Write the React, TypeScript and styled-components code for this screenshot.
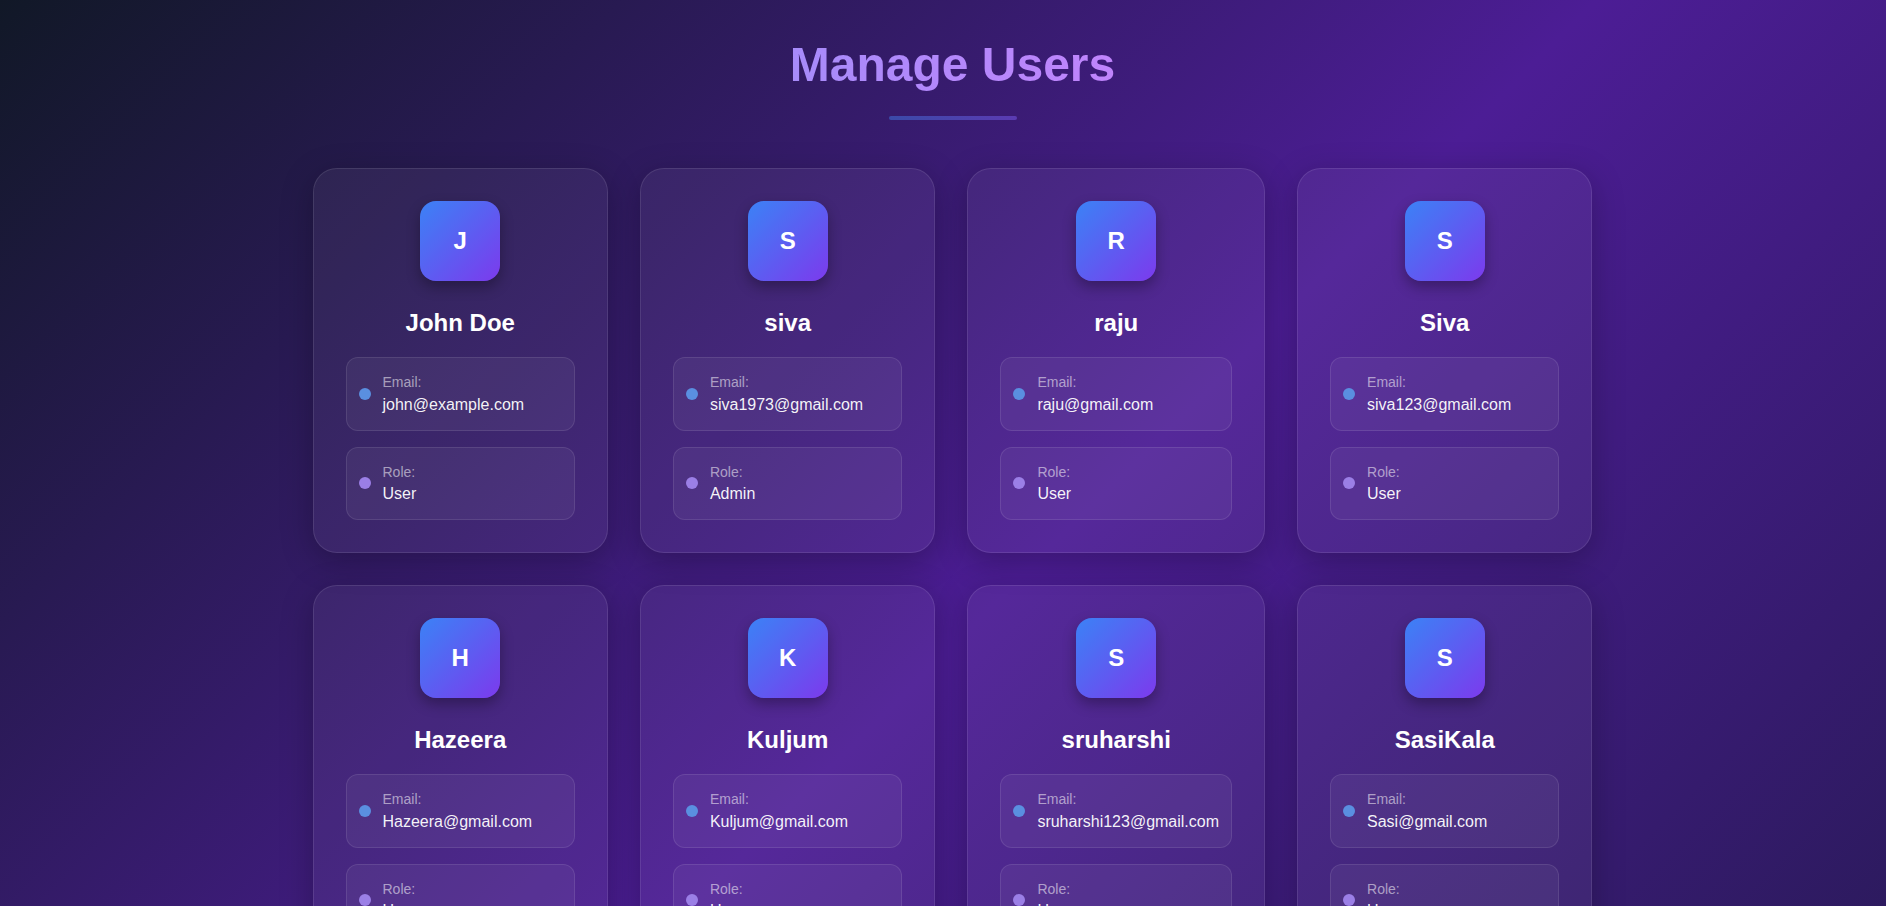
import * as React from 'react';
import styled, { createGlobalStyle } from 'styled-components';

const GlobalStyle = createGlobalStyle`
  body {
    margin: 0;
    font-family: 'Liberation Sans', Arial, sans-serif;
    background: #2a1a5a;
  }
`;

const Page = styled.div`
  min-height: 100vh;
  box-sizing: border-box;
  padding: 37px 0 48px 19px;
  background: linear-gradient(135deg, #111827 0%, #4c1d95 55%, #2a1a5a 100%);
`;

const Header = styled.header`
  display: flex;
  flex-direction: column;
  align-items: center;
  margin-bottom: 48px;
`;

const Title = styled.h1`
  margin: 0;
  font-size: 48px;
  font-weight: 700;
  background: linear-gradient(90deg, #a78bfa, #c084fc);
  -webkit-background-clip: text;
  background-clip: text;
  color: transparent;
`;

const Underline = styled.div`
  width: 128px;
  height: 4px;
  margin-top: 24px;
  border-radius: 2px;
  background: linear-gradient(90deg, #3b4aa8, #5b3bb2);
`;

const Grid = styled.div`
  max-width: 1280px;
  margin: 0 auto;
  display: grid;
  grid-template-columns: repeat(4, 1fr);
  gap: 32px;
`;

const Card = styled.div`
  display: flex;
  flex-direction: column;
  align-items: center;
  padding: 32px;
  border-radius: 24px;
  border: 1px solid rgba(255, 255, 255, 0.1);
  background: rgba(255, 255, 255, 0.05);
  box-shadow: 0 8px 32px rgba(0, 0, 0, 0.25);
`;

const Avatar = styled.div`
  width: 80px;
  height: 80px;
  border-radius: 16px;
  display: flex;
  align-items: center;
  justify-content: center;
  margin-bottom: 24px;
  background: linear-gradient(135deg, #3b82f6, #7c3aed);
  box-shadow: 0 6px 14px rgba(0, 0, 0, 0.3);
  color: #fff;
  font-size: 24px;
  font-weight: 700;
`;

const Name = styled.h2`
  margin: 0 0 16px;
  font-size: 24px;
  line-height: 1.5;
  font-weight: 700;
  color: #fff;
`;

const InfoList = styled.div`
  align-self: stretch;
  display: flex;
  flex-direction: column;
  gap: 16px;
`;

const InfoBox = styled.div`
  display: flex;
  align-items: center;
  gap: 12px;
  padding: 16px 12px;
  border-radius: 12px;
  border: 1px solid rgba(255, 255, 255, 0.1);
  background: rgba(255, 255, 255, 0.05);
`;

const Dot = styled.span<{ $tone: 'email' | 'role' }>`
  flex: none;
  width: 12px;
  height: 12px;
  border-radius: 50%;
  background: ${props => (props.$tone === 'email' ? '#5a8fe0' : '#9b7fe6')};
`;

const InfoText = styled.div`
  display: flex;
  flex-direction: column;
  min-width: 0;
`;

const Label = styled.span`
  font-size: 14px;
  margin-bottom: 5.5px;
  color: rgba(255, 255, 255, 0.55);
`;

const Value = styled.span`
  font-size: 16px;
  color: rgba(255, 255, 255, 0.95);
  white-space: nowrap;
`;

interface User {
  name: string;
  email: string;
  role: string;
}

const users: User[] = [
  { name: 'John Doe', email: 'john@example.com', role: 'User' },
  { name: 'siva', email: 'siva1973@gmail.com', role: 'Admin' },
  { name: 'raju', email: 'raju@gmail.com', role: 'User' },
  { name: 'Siva', email: 'siva123@gmail.com', role: 'User' },
  { name: 'Hazeera', email: 'Hazeera@gmail.com', role: 'User' },
  { name: 'Kuljum', email: 'Kuljum@gmail.com', role: 'User' },
  { name: 'sruharshi', email: 'sruharshi123@gmail.com', role: 'User' },
  { name: 'SasiKala', email: 'Sasi@gmail.com', role: 'User' },
];

const UserCard: React.FC<{ user: User }> = ({ user }) => (
  <Card>
    <Avatar>{user.name.charAt(0).toUpperCase()}</Avatar>
    <Name>{user.name}</Name>
    <InfoList>
      <InfoBox>
        <Dot $tone="email" />
        <InfoText>
          <Label>Email:</Label>
          <Value>{user.email}</Value>
        </InfoText>
      </InfoBox>
      <InfoBox>
        <Dot $tone="role" />
        <InfoText>
          <Label>Role:</Label>
          <Value>{user.role}</Value>
        </InfoText>
      </InfoBox>
    </InfoList>
  </Card>
);

const App: React.FC = () => (
  <>
    <GlobalStyle />
    <Page>
      <Header>
        <Title>Manage Users</Title>
        <Underline />
      </Header>
      <Grid>
        {users.map(user => (
          <UserCard key={user.email} user={user} />
        ))}
      </Grid>
    </Page>
  </>
);

export default App;
